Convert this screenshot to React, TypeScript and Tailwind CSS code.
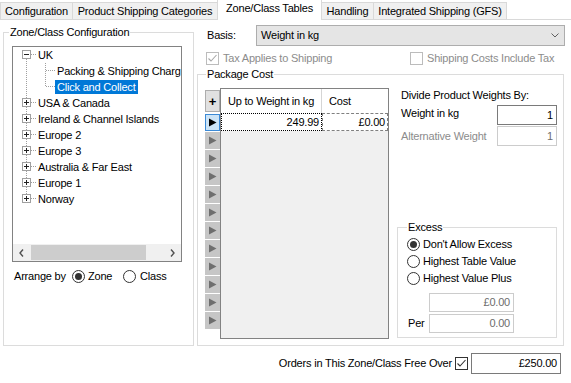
import React from "react";

type Kids = { children?: React.ReactNode };

function Check({ color }: { color: string }) {
  return (
    <svg width="11" height="11" viewBox="0 0 11 11">
      <path d="M1.5 5.5 L4 8 L9.5 2" fill="none" stroke={color} strokeWidth="1.1" />
    </svg>
  );
}

function Checkbox({ checked, disabled }: { checked?: boolean; disabled?: boolean }) {
  return (
    <span
      className={`flex h-[13px] w-[13px] shrink-0 items-center justify-center border bg-white ${
        disabled ? "border-[#bcbcbc]" : "border-[#333333]"
      }`}
    >
      {checked && <Check color={disabled ? "#a8a8a8" : "#333333"} />}
    </span>
  );
}

function Radio({ checked }: { checked?: boolean }) {
  return (
    <span className="flex h-[13px] w-[13px] shrink-0 items-center justify-center rounded-full border border-[#333333] bg-white">
      {checked && <span className="h-[7px] w-[7px] rounded-full bg-[#333333]" />}
    </span>
  );
}

function Group({ title, className, labelClass, children }: Kids & { title: string; className: string; labelClass: string }) {
  return (
    <div className={`relative shrink-0 border border-[#dcdcdc] ${className}`}>
      <span className={`absolute top-[-7px] bg-white px-[1px] leading-[13px] whitespace-nowrap ${labelClass}`}>{title}</span>
      {children}
    </div>
  );
}

function Tabs() {
  const tab = "flex h-[17px] shrink-0 items-center justify-center border-l border-r border-t border-[#d9d9d9] bg-[#f0f0f0] -mr-px";
  return (
    <div className="flex h-[20px] items-end border-b border-[#d9d9d9]">
      <div className={`${tab} w-[73px]`}>Configuration</div>
      <div className={`${tab} w-[146px]`}>Product Shipping Categories</div>
      <div className="relative z-10 -mb-px -mr-px flex h-[21px] w-[105px] shrink-0 items-center justify-center border-l border-r border-t border-[#d9d9d9] bg-white pb-[3px]">
        Zone/Class Tables
      </div>
      <div className={`${tab} w-[53px]`}>Handling</div>
      <div className={`${tab} w-[134px]`}>Integrated Shipping (GFS)</div>
    </div>
  );
}

const dot = { stroke: "#a0a0a0", strokeDasharray: "1 1", shapeRendering: "crispEdges" as const };

function Expander({ open }: { open: boolean }) {
  return (
    <>
      <rect x="9.5" y="3.5" width="8" height="8" fill="white" stroke="#a0a0a0" shapeRendering="crispEdges" />
      <line x1="11" y1="7.5" x2="16" y2="7.5" stroke="#222" shapeRendering="crispEdges" />
      {!open && <line x1="13.5" y1="5" x2="13.5" y2="10" stroke="#222" shapeRendering="crispEdges" />}
    </>
  );
}

function RootRow({ label, open, first, last }: { label: string; open?: boolean; first?: boolean; last?: boolean }) {
  return (
    <div className="flex h-[16px] items-center whitespace-nowrap">
      <svg width="23" height="16" className="shrink-0">
        <line x1="13.5" y1={first ? 8 : 0} x2="13.5" y2={last ? 8 : 16} {...dot} />
        <line x1="18" y1="7.5" x2="23" y2="7.5" {...dot} />
        <Expander open={!!open} />
      </svg>
      <span className="px-[2px] leading-[14px]">{label}</span>
    </div>
  );
}

function ChildRow({ label, last, selected }: { label: string; last?: boolean; selected?: boolean }) {
  return (
    <div className="flex h-[16px] items-center whitespace-nowrap">
      <svg width="42" height="16" className="shrink-0">
        <line x1="13.5" y1="0" x2="13.5" y2="16" {...dot} />
        <line x1="32.5" y1="0" x2="32.5" y2={last ? 8 : 16} {...dot} />
        <line x1="33" y1="7.5" x2="42" y2="7.5" {...dot} />
      </svg>
      <span className={`px-[2px] leading-[14px] ${selected ? "bg-[#0078d7] text-white" : ""}`}>{label}</span>
    </div>
  );
}

function Chevron({ dir }: { dir: "left" | "right" | "down" }) {
  if (dir === "down")
    return (
      <svg width="8" height="5" viewBox="0 0 8 5">
        <path d="M0.5 0.5 L4 4 L7.5 0.5" fill="none" stroke="#606060" />
      </svg>
    );
  return (
    <svg width="5" height="8" viewBox="0 0 5 8">
      <path d={dir === "left" ? "M4 0.5 L1 4 L4 7.5" : "M1 0.5 L4 4 L1 7.5"} fill="none" stroke="#505050" strokeWidth="1.4" />
    </svg>
  );
}

function Tree() {
  const roots = ["USA & Canada", "Ireland & Channel Islands", "Europe 2", "Europe 3", "Australia & Far East", "Europe 1", "Norway"];
  return (
    <div className="ml-[8px] mt-[13px] flex h-[216px] w-[170px] flex-col border border-[#828282] bg-white">
      <div className="flex-1 overflow-hidden">
        <RootRow label="UK" open first />
        <ChildRow label="Packing & Shipping Charg" />
        <ChildRow label="Click and Collect" last selected />
        {roots.map((r, i) => (
          <RootRow key={r} label={r} last={i === roots.length - 1} />
        ))}
      </div>
      <div className="flex h-[17px] bg-[#f0f0f0]">
        <div className="flex w-[17px] items-center justify-center">
          <Chevron dir="left" />
        </div>
        <div className="flex flex-1 py-[1px]">
          <div className="ml-[1px] w-[115px] bg-[#cdcdcd]" />
        </div>
        <div className="flex w-[17px] items-center justify-center">
          <Chevron dir="right" />
        </div>
      </div>
    </div>
  );
}

function RowArrow({ selected }: { selected?: boolean }) {
  return (
    <div
      className={`flex h-[17px] w-[15px] items-center justify-center ${
        selected ? "border border-[#3c8ad6] bg-[#cce4f7]" : "bg-[#c6c6c6]"
      }`}
    >
      <svg width="9" height="9" viewBox="0 0 9 9">
        <path d="M1 0.5 L8.5 4.5 L1 8.5 Z" fill={selected ? "#000000" : "#6e6e6e"} />
      </svg>
    </div>
  );
}

function Field({ value, disabled, className }: { value: string; disabled?: boolean; className: string }) {
  return (
    <div
      className={`flex shrink-0 items-center justify-end border bg-white pr-[3px] ${
        disabled ? "border-[#cccccc] text-[#6d6d6d]" : "border-[#7a7a7a]"
      } ${className}`}
    >
      {value}
    </div>
  );
}

export default function App() {
  return (
    <div className="h-[383px] w-[571px] overflow-hidden bg-white font-['Liberation_Sans',Arial,sans-serif] text-[11px] leading-[13px] tracking-[-0.2px] text-black">
      <Tabs />
      <div className="flex items-start">
        <Group title="Zone/Class Configuration" className="ml-[3px] mt-[12px] h-[314px] w-[191px]" labelClass="left-[5px]">
          <Tree />
          <div className="mt-[7px] flex h-[14px] items-center pl-[10px]">
            <span className="w-[58px]">Arrange by</span>
            <Radio checked />
            <span className="ml-[3px] w-[35px]">Zone</span>
            <Radio />
            <span className="ml-[4px]">Class</span>
          </div>
        </Group>

        <div className="ml-[3px] mt-[5px] flex w-[369px] flex-col">
          <div className="flex h-[21px] items-center">
            <span className="w-[59px] pl-[10px]">Basis:</span>
            <div className="flex h-[21px] w-[309px] items-center justify-between border border-[#adadad] bg-[#e5e5e5] pl-[4px] pr-[5px]">
              <span>Weight in kg</span>
              <Chevron dir="down" />
            </div>
          </div>

          <div className="mt-[6px] flex h-[13px] items-center text-[#8c8c8c]">
            <div className="flex w-[213px] items-center pl-[9px]">
              <Checkbox checked disabled />
              <span className="ml-[4px]">Tax Applies to Shipping</span>
            </div>
            <Checkbox disabled />
            <span className="ml-[4px]">Shipping Costs Include Tax</span>
          </div>

          <Group title="Package Cost" className="mt-[9px] h-[272px] w-[367px]" labelClass="left-[8px]">
            <div className="flex items-start pl-[7px]">
              <div className="mt-[15px] flex w-[15px] flex-col gap-[1px]">
                <div className="mb-[1px] flex h-[22px] items-center justify-center border border-[#adadad] bg-[#e1e1e1] text-[13px] font-bold">
                  +
                </div>
                <RowArrow selected />
                {Array.from({ length: 11 }).map((_, i) => (
                  <RowArrow key={i} />
                ))}
              </div>

              <div className="mt-[13px] flex h-[251px] w-[169px] flex-col border border-[#828282] bg-[#f0f0f0]">
                <div className="flex h-[24px] items-center bg-white">
                  <span className="flex h-full w-[101px] items-center border-r border-[#d5d5d5] pl-[7px]">Up to Weight in kg</span>
                  <span className="pl-[7px]">Cost</span>
                </div>
                <div className="flex h-[18px] bg-white">
                  <span className="flex w-[101px] items-center justify-end border border-dotted border-black pr-[2px]">249.99</span>
                  <span className="flex flex-1 items-center justify-end border border-dashed border-[#808080] pr-[2px]">£0.00</span>
                </div>
              </div>

              <div className="ml-[8px] mt-[14px] flex w-[160px] flex-col">
                <span className="pl-[4px]">Divide Product Weights By:</span>
                <div className="mt-[3px] flex h-[20px] items-center justify-between">
                  <span className="pb-[3px] pl-[4px]">Weight in kg</span>
                  <Field value="1" className="h-[20px] w-[60px]" />
                </div>
                <div className="mt-[1px] flex h-[20px] items-center justify-between">
                  <span className="pl-[4px] text-[#8c8c8c]">Alternative Weight</span>
                  <Field value="1" disabled className="h-[20px] w-[60px]" />
                </div>

                <Group title="Excess" className="mt-[81px] h-[111px] w-[160px]" labelClass="left-[9px]">
                  <div className="mt-[8px] flex flex-col pl-[9px]">
                    <div className="flex h-[17px] items-center gap-[3px]">
                      <Radio checked />
                      <span>Don't Allow Excess</span>
                    </div>
                    <div className="flex h-[17px] items-center gap-[3px]">
                      <Radio />
                      <span>Highest Table Value</span>
                    </div>
                    <div className="flex h-[17px] items-center gap-[3px]">
                      <Radio />
                      <span>Highest Value Plus</span>
                    </div>
                    <Field value="£0.00" disabled className="ml-[22px] mt-[6px] h-[19px] w-[85px]" />
                    <div className="mt-[2px] flex items-center">
                      <span className="w-[22px] pl-[1px]">Per</span>
                      <Field value="0.00" disabled className="h-[19px] w-[85px]" />
                    </div>
                  </div>
                </Group>
              </div>
            </div>
          </Group>
        </div>
      </div>

      <div className="mt-[7px] flex h-[21px] items-center justify-end pr-[10px]">
        <span>Orders in This Zone/Class Free Over</span>
        <span className="ml-[3px]">
          <Checkbox checked />
        </span>
        <Field value="£250.00" className="ml-[3px] h-[21px] w-[90px]" />
      </div>
    </div>
  );
}
